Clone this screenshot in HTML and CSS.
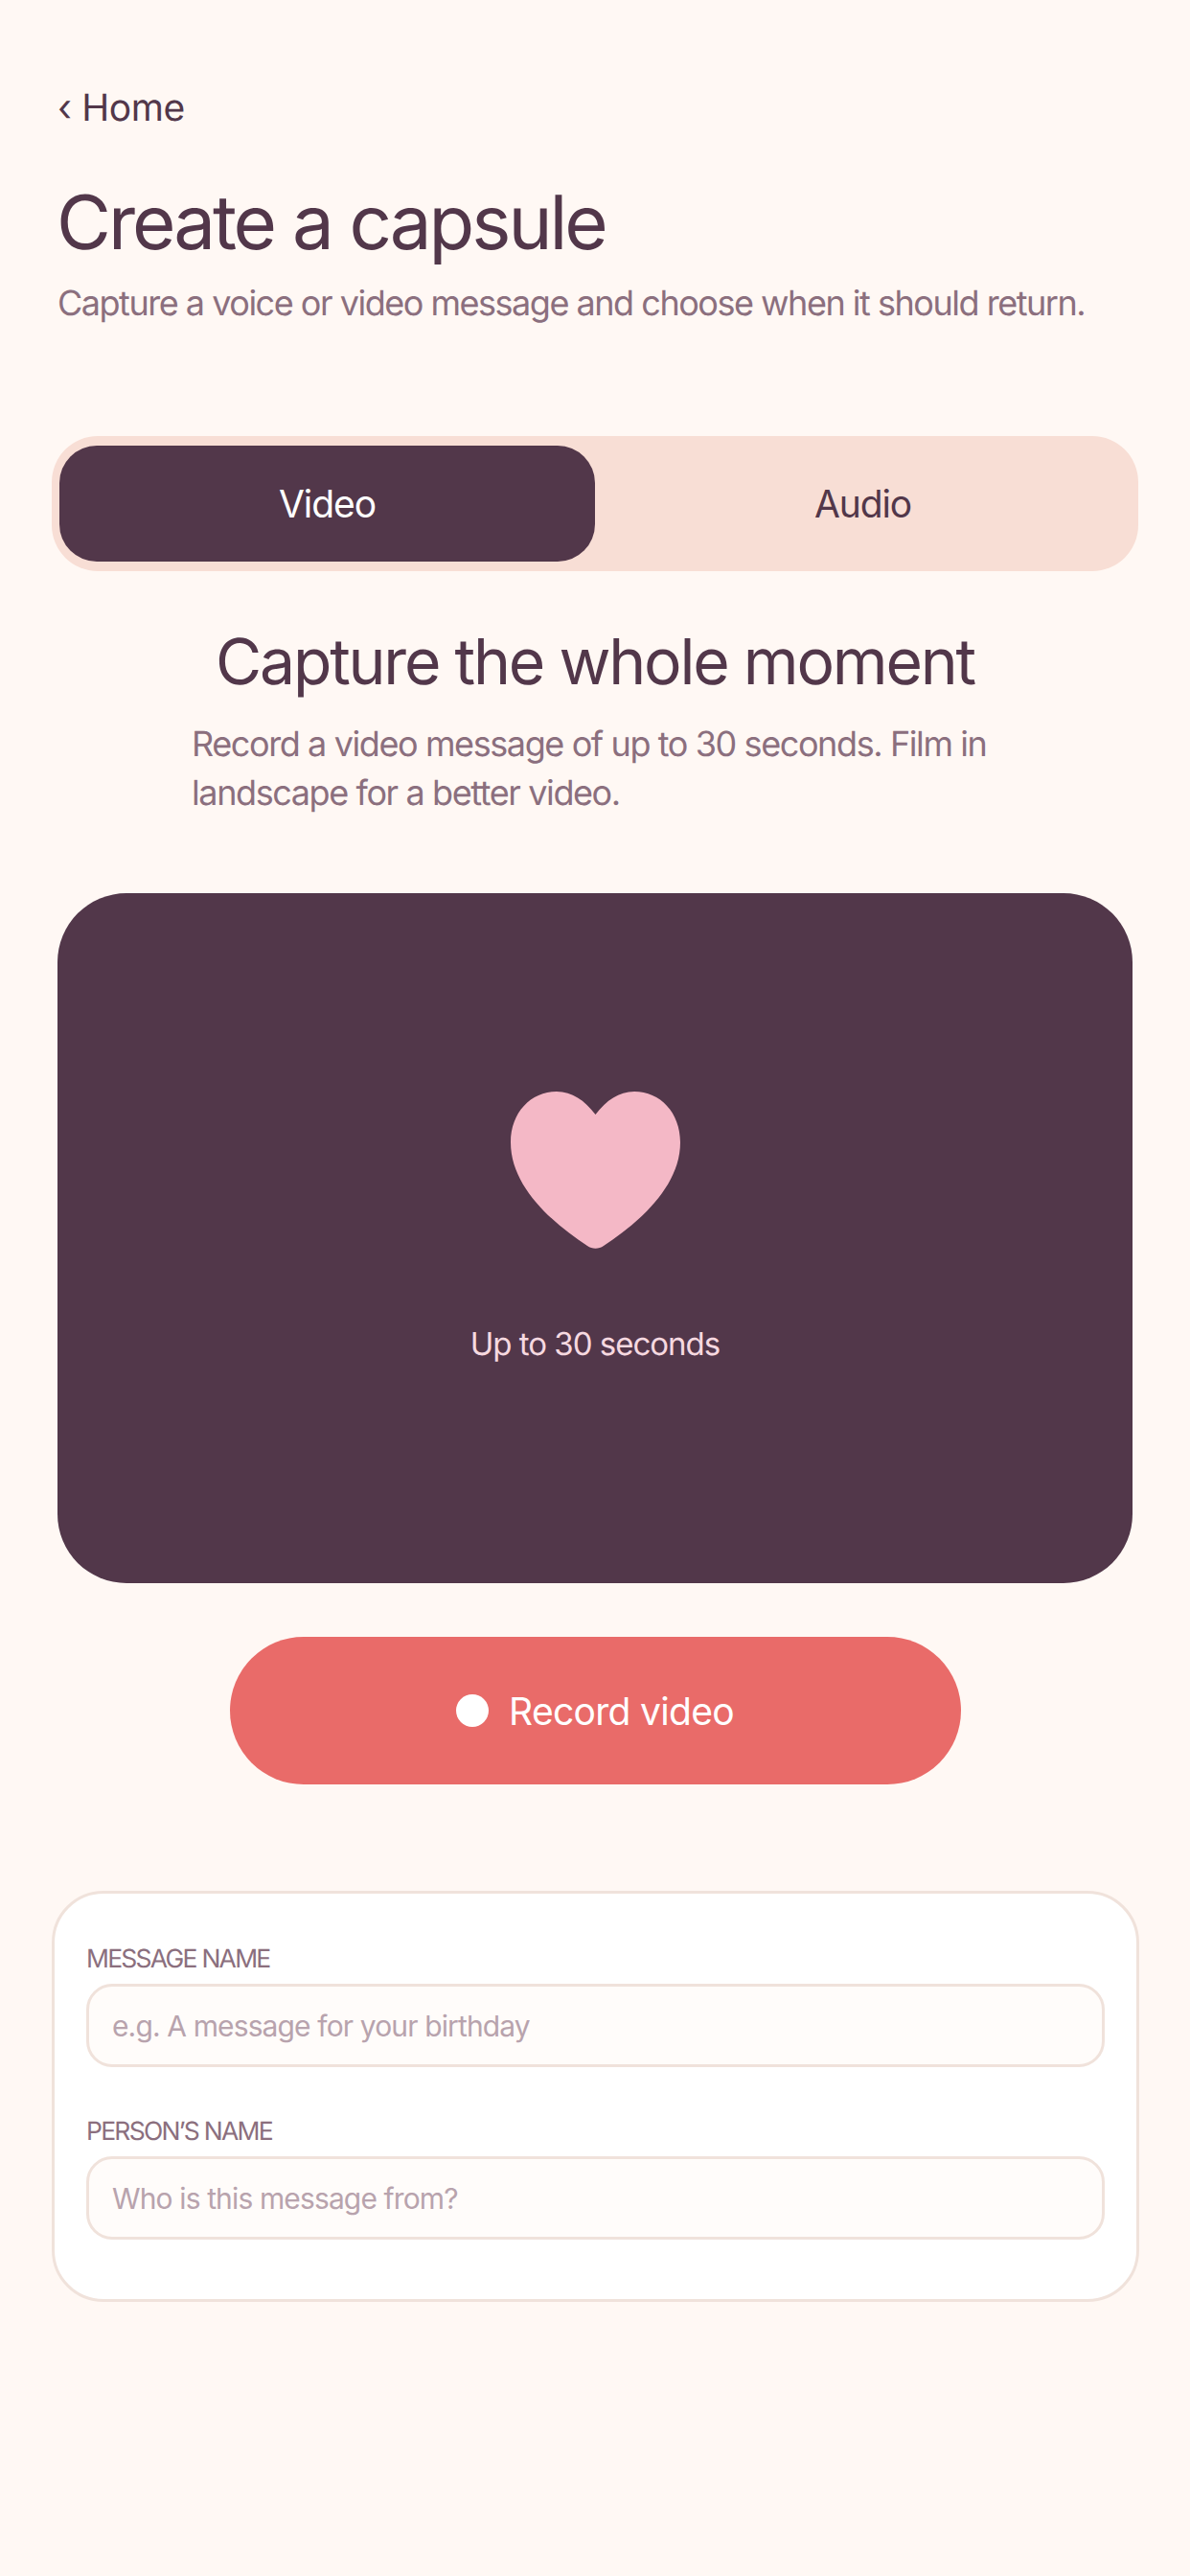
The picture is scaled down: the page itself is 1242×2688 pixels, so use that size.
FILE: index.html
```html
<!DOCTYPE html>
<html lang="en">
<head>
<meta charset="utf-8">
<title>Create a capsule</title>
<link rel="stylesheet" href="styles.css">
</head>
<body>
<main class="page">
  <a class="back">‹ Home</a>
  <h1 class="title">Create a capsule</h1>
  <p class="subtitle">Capture a voice or video message and choose when it should return.</p>

  <div class="tabs">
    <button class="tab tab-active">Video</button>
    <button class="tab">Audio</button>
  </div>

  <h2 class="heading">Capture the whole moment</h2>
  <p class="intro">Record a video message of up to 30 seconds. Film in landscape for a better video.</p>

  <section class="stage">
    <svg class="heart" viewBox="0 0 177 164" aria-hidden="true">
      <path d="M88.5 24C77 9 64 0 48 0C21 0 0 22 0 53C0 100 45 138 80 161C85 164.5 92 164.5 97 161C132 138 177 100 177 53C177 22 156 0 129 0C113 0 100 9 88.5 24Z"/>
    </svg>
    <p class="stage-note">Up to 30 seconds</p>
  </section>

  <button class="record"><span class="record-dot"></span>Record video</button>

  <form class="details">
    <label class="field">
      <span class="field-label">MESSAGE NAME</span>
      <input class="field-input" placeholder="e.g. A message for your birthday">
    </label>
    <label class="field">
      <span class="field-label">PERSON’S NAME</span>
      <input class="field-input" placeholder="Who is this message from?">
    </label>
  </form>
</main>
</body>
</html>
```

FILE: styles.css
```css
* { box-sizing: border-box; }
html, body { margin: 0; padding: 0; }
body {
  width: 1242px;
  height: 2688px;
  background: #fff8f4;
  color: #52374a;
  font-family: Inter, "Noto Sans", sans-serif;
  font-weight: 370;
  text-rendering: geometricPrecision;
  overflow: hidden;
}
.page {
  display: flex;
  flex-direction: column;
  padding: 89px 60px 0;
}
.back {
  font-size: 39px;
  line-height: 48px;
  letter-spacing: -0.4px;
}
.title {
  margin: 50px 0 0 -1px;
  font-size: 78px;
  line-height: 90px;
  font-weight: 370;
  letter-spacing: -3.05px;
}
.subtitle {
  margin: 14px 0 0;
  font-size: 36px;
  line-height: 50px;
  letter-spacing: -1.48px;
  white-space: nowrap;
  color: #8b6f7e;
}
.tabs {
  display: flex;
  margin: 114px -6px 0;
  padding: 10px 8px;
  height: 141px;
  border-radius: 48px;
  background: #f8ded5;
}
.tab {
  flex: 1;
  border: 0;
  border-radius: 39px;
  background: transparent;
  color: #52374a;
  font: inherit;
  font-size: 39px;
  letter-spacing: -1.1px;
}
.tab-active {
  background: #52374a;
  color: #fff;
}
.heading {
  margin: 54px 0 0;
  font-size: 66px;
  line-height: 80px;
  font-weight: 370;
  letter-spacing: -2.2px;
  text-align: center;
}
.intro {
  margin: 21px 0 0;
  align-self: center;
  width: 842px;
  font-size: 36px;
  line-height: 51px;
  letter-spacing: -1.4px;
  color: #8b6f7e;
}
.stage {
  display: flex;
  flex-direction: column;
  align-items: center;
  margin-top: 79px;
  padding-top: 207px;
  height: 720px;
  border-radius: 72px;
  background: #52374a;
}
.heart {
  display: block;
  width: 177px;
  height: 164px;
  fill: #f4b8c6;
}
.stage-note {
  margin: 77px 0 0;
  font-size: 33px;
  line-height: 44px;
  letter-spacing: -1px;
  color: #f6d9e0;
}
.record {
  display: flex;
  align-items: center;
  justify-content: center;
  gap: 21px;
  align-self: center;
  margin-top: 56px;
  width: 763px;
  height: 154px;
  border: 0;
  border-radius: 77px;
  background: #e96b69;
  color: #fff;
  font: inherit;
  font-size: 39px;
  letter-spacing: -0.7px;
}
.record-dot {
  width: 34px;
  height: 34px;
  border-radius: 50%;
  background: #fff;
}
.details {
  display: flex;
  flex-direction: column;
  gap: 49px;
  margin: 111px -7px 0 -6px;
  padding: 50px 33px 0;
  height: 429px;
  border: 3px solid #f0e2db;
  border-radius: 54px;
  background: #fff;
}
.field {
  display: flex;
  flex-direction: column;
  gap: 8px;
}
.field-label {
  font-size: 26.5px;
  line-height: 36px;
  letter-spacing: -1.75px;
  color: #8b6f7e;
}
.field-input {
  width: 100%;
  height: 87px;
  padding: 0 24px;
  border: 3px solid #f0e2db;
  border-radius: 27px;
  background: #fffcfa;
  color: #52374a;
  font: inherit;
  font-size: 30px;
  letter-spacing: -0.87px;
  outline: 0;
}
.field-input::placeholder {
  color: #b8a3ad;
  opacity: 1;
}
```
